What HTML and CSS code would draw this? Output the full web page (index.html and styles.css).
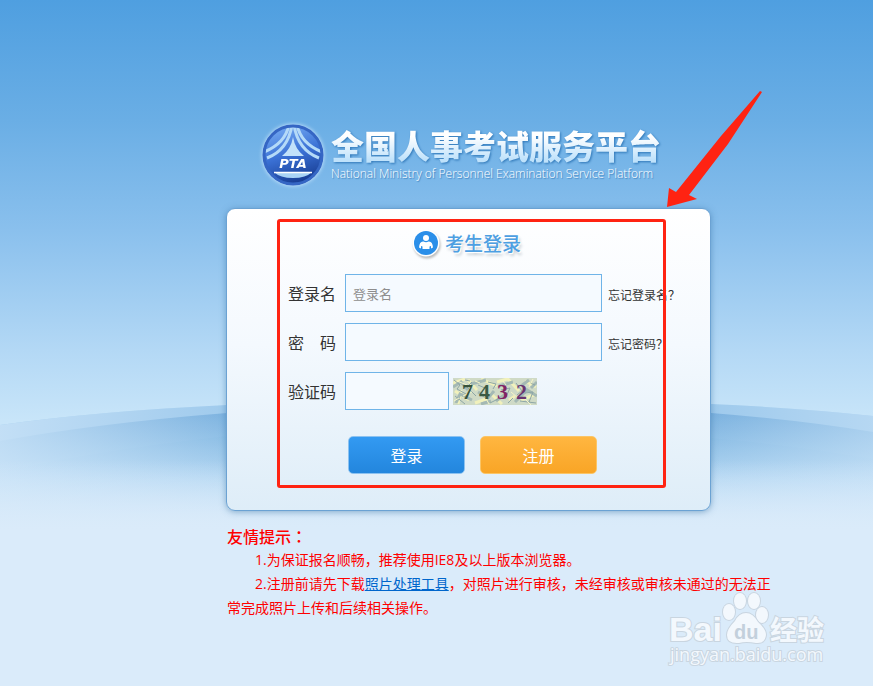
FILE: index.html
```
<!doctype html>
<html lang="zh-CN">
  <head>
    <meta charset="utf-8">
    <title>全国人事考试服务平台</title>
    <link rel="stylesheet" href="styles.css">
  </head>
  <body>
    <svg class="hills" viewBox="0 0 873 300" preserveAspectRatio="none" aria-hidden="true">
      <defs>
        <linearGradient id="hill-b" gradientUnits="userSpaceOnUse" x1="0" y1="10" x2="0" y2="130">
          <stop offset="0" stop-color="#76aedd"/>
          <stop offset="0.3" stop-color="#94c3e8"/>
          <stop offset="0.7" stop-color="#c2dff6"/>
          <stop offset="1" stop-color="#daebfa"/>
        </linearGradient>
        <linearGradient id="hill-c" gradientUnits="userSpaceOnUse" x1="0" y1="30" x2="0" y2="130">
          <stop offset="0" stop-color="#83b8e2"/>
          <stop offset="0.5" stop-color="#b2d6f2"/>
          <stop offset="1" stop-color="#daebfa"/>
        </linearGradient>
        <linearGradient id="hill-sides" x1="0" y1="0" x2="1" y2="0">
          <stop offset="0" stop-color="#cfe6f9" stop-opacity="0.75"/>
          <stop offset="0.28" stop-color="#cfe6f9" stop-opacity="0"/>
          <stop offset="0.8" stop-color="#cfe6f9" stop-opacity="0"/>
          <stop offset="1" stop-color="#cfe6f9" stop-opacity="0.5"/>
        </linearGradient>
        <linearGradient id="hill-floor" gradientUnits="userSpaceOnUse" x1="0" y1="60" x2="0" y2="130">
          <stop offset="0" stop-color="#daebfa" stop-opacity="0"/>
          <stop offset="1" stop-color="#daebfa"/>
        </linearGradient>
      </defs>
      <path d="M0 25Q100 11 227 5Q470-8 711 4Q800 8 873 16V300H0Z" fill="#9dc9ec"/>
      <path d="M0 41Q100 23 227 13Q470-4 711 13Q800 20 873 32V300H0Z" fill="url(#hill-b)"/>
      <path d="M0 72Q100 50 227 36Q470 15 711 38Q800 46 873 59V300H0Z" fill="url(#hill-c)"/>
      <path d="M0 25Q100 11 227 5Q470-8 711 4Q800 8 873 16V300H0Z" fill="url(#hill-sides)"/>
      <rect y="60" width="873" height="240" fill="url(#hill-floor)"/>
    </svg>

    <div class="wrap">
      <header class="brand">
        <svg class="logo" viewBox="0 0 68 68" aria-hidden="true">
          <defs>
            <linearGradient id="globe" x1="0.3" y1="0" x2="0.6" y2="1">
              <stop offset="0" stop-color="#75abf3"/>
              <stop offset="0.5" stop-color="#3a70d4"/>
              <stop offset="1" stop-color="#15398e"/>
            </linearGradient>
            <clipPath id="globe-clip"><circle cx="34" cy="35" r="30"/></clipPath>
          </defs>
          <circle cx="34" cy="35" r="30" fill="url(#globe)"/>
          <g clip-path="url(#globe-clip)">
            <g fill="none" stroke="#b4daf8" stroke-width="3">
              <path d="M30 4Q27 23 5 32M38 4Q41 23 63 32"/>
              <path d="M33 5Q29 30 8 38M35 5Q39 30 60 38"/>
            </g>
            <path d="M34 17Q32 29 23 36H45Q36 29 34 17Z" fill="#c2e2fa"/>
            <path d="M15 52H53Q47 58 34 58T15 52Z" fill="#a9d3f5"/>
            <path d="M15 52.500H53" stroke="#fff" stroke-width="1.500"/>
          </g>
          <circle cx="34" cy="35" r="29" fill="none" stroke="#3566c4" stroke-width="3"/>
          <text class="logo-text" x="34" y="48" text-anchor="middle">PTA</text>
        </svg>
        <div>
          <h1>全国人事考试服务平台</h1>
          <p class="subtitle">National Ministry of Personnel Examination Service Platform</p>
        </div>
      </header>

      <main class="panel">
        <h2>
          <svg class="user-icon" viewBox="0 0 28 28" aria-hidden="true">
            <circle cx="14" cy="14" r="13.500" fill="#fff"/>
            <circle cx="14" cy="14" r="12" fill="#2b8fe9"/>
            <circle cx="14" cy="9" r="3" fill="#fff"/>
            <path d="M7 18.500Q7.500 12 11.500 12.500Q14 14 16.500 12.500Q20.500 12 21 18.500L19 19.500V17L17.500 17.500V20H10.500V17.500L9 17V19.500Z" fill="#fff"/>
          </svg>
          <span>考生登录</span>
        </h2>
        <form>
          <div class="row">
            <label for="username">登录名</label>
            <input type="text" id="username" placeholder="登录名">
            <a class="forgot" href="#">忘记登录名？</a>
          </div>
          <div class="row">
            <label for="password">密　码</label>
            <input type="password" id="password">
            <a class="forgot" href="#">忘记密码？</a>
          </div>
          <div class="row">
            <label for="code">验证码</label>
            <input type="text" id="code" class="code">
            <svg class="captcha" viewBox="0 0 84 27" role="img" aria-label="7432">
              <rect width="84" height="27" fill="#cfdac6"/>
              <g fill="none" stroke-width="3">
                <path stroke="#f1f1bc" d="M0 5L12 1M2 13L16 22M15 2L24 12M28 1L44 8M37 15L49 26M54 0L66 13M68 22L83 16M72 3L83 9M22 25L36 20M5 26L8 12M44 4L54 1M56 22L62 18"/>
                <path stroke="#a4b9b4" d="M0 9L8 4L15 12M3 25L7 16L19 22M18 6L33 2M25 14L35 20L41 13M43 23L54 15M46 8L60 4M62 24L74 12L84 18M68 8L76 2M78 10L84 4M28 26L38 23"/>
              </g>
              <g fill="none" stroke="#8da6a6" stroke-width="1">
                <path d="M1 2L7 7L4 11L13 16M2 18L12 26M19 4L14 9L23 18M25 7L32 10L27 17M35 4L43 6L40 11M48 12L57 10L52 21M63 5L69 13L64 17M72 15L80 14L76 24M67 23L83 25M12 2L17 3M37 25L45 21M55 25L60 20M77 5L82 7"/>
                <path stroke="#f7f5c6" d="M4 3L14 7M1 23L6 20M22 3L27 5M31 17L36 26M50 3L53 7M58 14L65 20M71 20L78 27M80 1L76 9M10 18L19 14"/>
              </g>
              <g class="digits">
                <text x="9" y="21" fill="#37523b">7</text>
                <text x="26" y="21" fill="#3c5a43">4</text>
                <text x="44" y="21" fill="#812464">3</text>
                <text x="63" y="21" fill="#68346f">2</text>
              </g>
            </svg>
          </div>
          <div class="actions">
            <button type="submit" class="btn login">登录</button>
            <button type="button" class="btn register">注册</button>
          </div>
        </form>
        <div class="mark-box"></div>
        <svg class="mark-arrow" viewBox="0 0 98 120" aria-hidden="true">
          <path d="M95 1L97 2L63 54L24 105L32 109L2 117L4 98L11 102L56 46Z" fill="#ff2312"/>
        </svg>
      </main>

      <section class="tips">
        <h3 lang="zh-TW">友情提示：</h3>
        <p>1.为保证报名顺畅，推荐使用IE8及以上版本浏览器。</p>
        <p>2.注册前请先下载<a href="#">照片处理工具</a>，对照片进行审核，未经审核或审核未通过的无法正常完成照片上传和后续相关操作。</p>
      </section>
    </div>

    <svg class="watermark" viewBox="0 0 160 80" aria-label="Baidu经验">
      <g class="wm-shape">
        <text class="wm-brand" x="0" y="51">Bai</text>
        <ellipse cx="60" cy="22" rx="6" ry="8"/>
        <ellipse cx="71" cy="11" rx="6" ry="8"/>
        <ellipse cx="85" cy="11" rx="6" ry="8"/>
        <ellipse cx="93" cy="25" rx="6" ry="8"/>
        <path d="M77 23Q84 23 89 32Q97 39 97 45Q96 54 87 53Q77 51 70 53Q58 54 58 45Q58 39 66 31Q70 23 77 23Z"/>
        <text class="wm-cn" x="101" y="50">经验</text>
        <text class="wm-url" x="1" y="71">jingyan.baidu.com</text>
      </g>
      <text class="wm-du" x="65" y="49">du</text>
    </svg>
  </body>
</html>
```
FILE: styles.css
```
* { box-sizing: border-box; }
body {
  margin: 0;
  min-height: 100vh;
  position: relative;
  overflow-x: hidden;
  font-family: "Open Sans", "Noto Sans CJK SC", sans-serif;
  font-size: 14px;
  color: #333;
  background: #daebfa linear-gradient(#4f9fe0 0, #6aaee5 120px, #8ac0ed 230px, #b3d8f5 350px, #c8e5f9 420px, #daebfa 520px) no-repeat;
}
h1, h2, h3, p { margin: 0; }

/* fondo */
.hills {
  position: absolute;
  top: 400px;
  left: 0;
  width: 100%;
  height: 300px;
  z-index: -1;
}

.wrap {
  max-width: 775px;
  padding: 120px 0 0 226px;
}

/* header */
.brand {
  display: flex;
  gap: 4px;
  padding-left: 33px;
}
.logo {
  width: 68px;
  height: 68px;
  flex: none;
  filter: drop-shadow(0 0 2px #d5ecff);
}
.logo-text {
  font: oblique bold 13px "DejaVu Sans", sans-serif;
  fill: #fff;
}
h1 {
  padding-top: 4px;
  font-family: "Noto Sans CJK SC", sans-serif;
  font-size: 33px;
  font-weight: 900;
  line-height: 43px;
  white-space: nowrap;
  color: transparent;
  background: linear-gradient(#fff 35%, #bfe2fb 85%);
  -webkit-background-clip: text;
  background-clip: text;
  filter: drop-shadow(1px 1px 1px #2f77b8);
}
.subtitle {
  font-size: 12px;
  font-weight: 300;
  line-height: 14px;
  white-space: nowrap;
  color: #fff;
  text-shadow: 1px 1px 1px #3f80bb;
}

/* login */
.panel {
  position: relative;
  max-width: 485px;
  margin-top: 20px;
  padding: 20px 20px 36px 61px;
  border: 1px solid #6ba2d3;
  border-radius: 9px;
  background: linear-gradient(#fff, #f4f9fe 45%, #deedf8);
  box-shadow: 0 1px 6px rgba(50, 110, 160, 0.5);
}
.panel h2 {
  display: flex;
  align-items: center;
  gap: 5px;
  height: 28px;
  padding-left: 124px;
  font-size: 19px;
  font-weight: 500;
  color: #4d9fe2;
  text-shadow: 1px 1px 0 #fff, 2px 3px 3px #c4ccd3;
}
.user-icon {
  width: 28px;
  height: 28px;
  filter: drop-shadow(1px 2px 1px #bbb);
}
form { margin-top: 17px; }
.row {
  display: flex;
  align-items: center;
  margin-bottom: 11px;
}
.row label {
  width: 57px;
  flex: none;
  font-size: 16px;
}
.row input {
  width: 257px;
  height: 38px;
  padding: 0 7px;
  border: 1px solid #6fb4e8;
  background: #f5faff;
  font: 13px "Noto Sans CJK SC", sans-serif;
}
.row input::placeholder { color: #8d8d8d; }
.row .code { width: 104px; }
.forgot {
  margin-left: 6px;
  padding-top: 4px;
  font-size: 12px;
  color: #333;
  text-decoration: none;
  white-space: nowrap;
}
.captcha {
  width: 84px;
  height: 27px;
  margin-left: 4px;
}
.digits { font: bold 22px "Liberation Serif", serif; }
.actions {
  display: flex;
  gap: 15px;
  margin-top: 26px;
  padding-left: 60px;
}
.btn {
  width: 117px;
  height: 38px;
  padding: 0;
  border: 1px solid #8cc2f0;
  border-radius: 5px;
  font: 16px "Noto Sans CJK SC", sans-serif;
  color: #fff;
  cursor: pointer;
}
.login { background: linear-gradient(#339af2, #2386dd); }
.register {
  border-color: #fbc566;
  background: linear-gradient(#ffb640, #f9a526);
}

/* red marks over the form */
.mark-box {
  position: absolute;
  top: 10px;
  left: 50px;
  width: 389px;
  height: 269px;
  border: 3px solid #ff2312;
  border-radius: 3px;
  pointer-events: none;
}
.mark-arrow {
  position: absolute;
  top: -119px;
  left: 438px;
  width: 98px;
  height: 120px;
  pointer-events: none;
}

.tips {
  max-width: 549px;
  margin-top: 13px;
  padding-left: 1px;
  line-height: 24px;
  color: #f00;
}
.tips h3 {
  font-family: "Noto Sans CJK TC", sans-serif;
  font-size: 16px;
  font-weight: 500;
}
.tips p { text-indent: 28px; }
.tips a { color: #0066cc; }

.watermark {
  position: absolute;
  top: 590px;
  right: 44px;
  width: 160px;
  height: 80px;
  overflow: visible;
}
.wm-shape {
  fill: #f3f8fd;
  stroke: #c9d5e0;
  stroke-width: 2px;
  paint-order: stroke;
}
.wm-brand { font: bold 34px "Liberation Sans", sans-serif; }
.wm-cn { font: bold 27px "Noto Sans CJK SC", sans-serif; }
.wm-url { font: 18px "Open Sans", sans-serif; }
.wm-du {
  font: bold 20px "Liberation Sans", sans-serif;
  fill: #c3d0dc;
}
```
